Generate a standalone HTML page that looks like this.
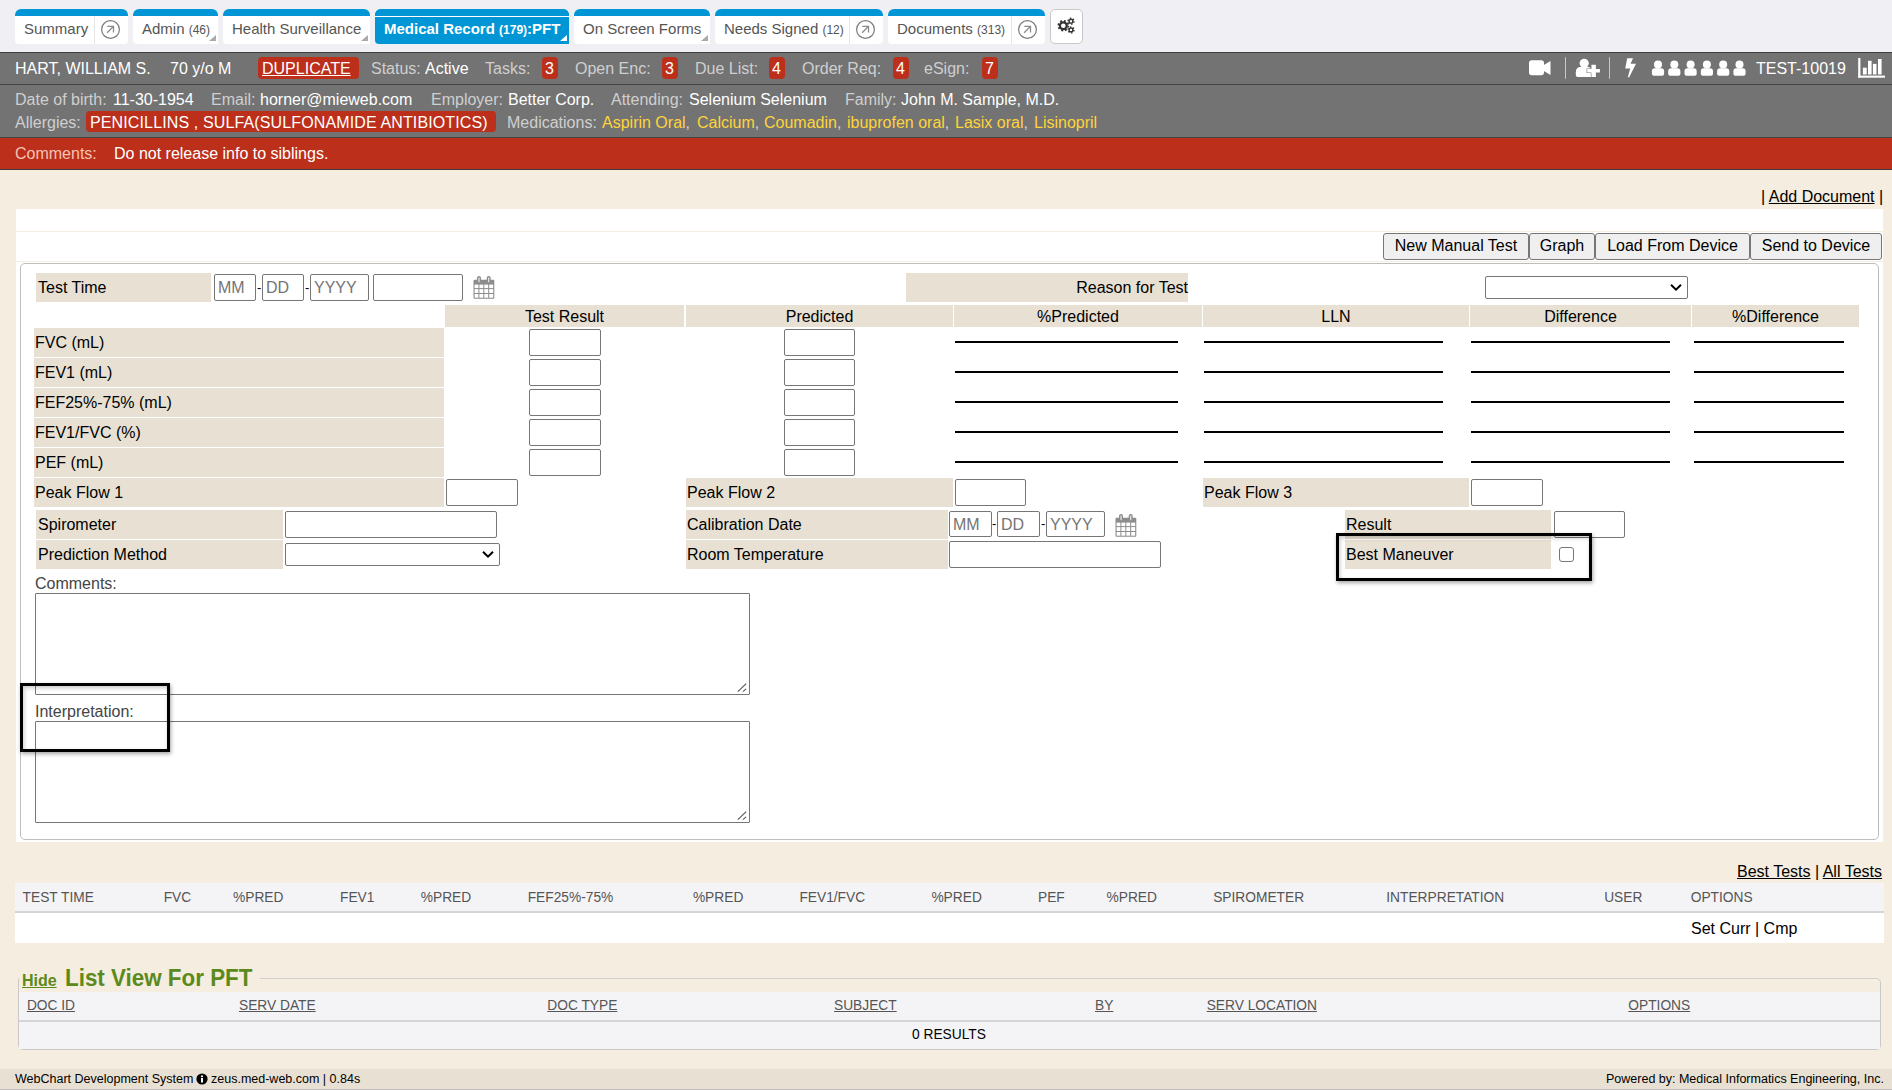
<!DOCTYPE html>
<html><head><meta charset="utf-8">
<style>
*{box-sizing:border-box;}
html,body{margin:0;padding:0;}
body{width:1892px;height:1090px;position:relative;overflow:hidden;background:#f5eddf;font-family:"Liberation Sans",sans-serif;color:#000;}
.a{position:absolute;}
.top{left:0;top:0;width:1892px;height:52px;background:#efeff4;}
.tab{position:absolute;top:9px;height:35px;background:#fff;border-radius:6px 6px 4px 4px;overflow:hidden;}
.tab .bar{position:absolute;left:0;top:0;right:0;height:7px;background:#0096d6;}
.tab .t{position:absolute;top:11px;font-size:15px;color:#555;white-space:nowrap;line-height:17px;}
.tab .t small{font-size:12px;}
.tab .sep{position:absolute;top:7px;bottom:0;width:1px;background:#e6e6e6;}
.tab .tri{position:absolute;right:2px;bottom:3px;width:0;height:0;border-left:7px solid transparent;border-bottom:6px solid #aaa;}
.circ{position:absolute;top:11px;}
.pbar{left:0;top:52px;width:1892px;height:33px;background:#737373;border-top:1px solid #3e3e3e;border-bottom:1px solid #444;}
.pinfo{left:0;top:85px;width:1892px;height:53px;background:#737373;border-bottom:1px solid #444;}
.rbar{left:0;top:138px;width:1892px;height:32px;background:#bc2f1b;border-bottom:1px solid #3c3c3c;}
.w{color:#fff;}
.g{color:#cfcfcf;}
.txt{position:absolute;font-size:16px;line-height:18px;white-space:nowrap;}
.badge{position:absolute;background:#bc2f1b;border-radius:4px;}
.y{color:#ffd43b;}

.lc{position:absolute;background:#e8e1d3;font-size:16px;line-height:18px;white-space:nowrap;padding-left:2px;}
.inp{position:absolute;background:#fff;border:1px solid #767676;border-radius:2px;}
.ph{position:absolute;font-size:16px;line-height:18px;color:#757575;white-space:nowrap;}
.ul{position:absolute;height:2px;background:#000;}
.btn{position:absolute;top:233px;height:27px;background:#efefef;border:1px solid #767676;border-radius:3px;font-size:16px;line-height:18px;text-align:center;padding-top:3px;white-space:nowrap;}
.hd{position:absolute;top:305px;height:22px;background:#e8e1d3;font-size:16px;line-height:18px;text-align:center;padding-top:3px;}

.th{position:absolute;font-size:13.75px;line-height:16px;color:#555;white-space:nowrap;}
.ft{position:absolute;font-size:12.5px;line-height:14px;color:#000;white-space:nowrap;}
</style></head><body>
<div class="a top"></div>
<!-- tabs -->
<div class="tab" style="left:15px;width:113px"><div class="bar"></div><div class="t" style="left:9px">Summary</div><div class="sep" style="left:79px"></div><svg class="circ" style="left:86px" width="19" height="19" viewBox="0 0 19 19"><circle cx="9.5" cy="9.5" r="8.9" fill="none" stroke="#7a7a7a" stroke-width="1.2"/><path d="M6.2 12.8L12.4 6.4M6.3 6.4H12.5V12.6" fill="none" stroke="#8a8a8a" stroke-width="1.3"/></svg></div>
<div class="tab" style="border-radius:6px 6px 0 4px;left:133px;width:85px"><div class="bar"></div><div class="t" style="left:9px">Admin <small>(46)</small></div><div class="tri"></div></div>
<div class="tab" style="border-radius:6px 6px 0 4px;left:223px;width:147px"><div class="bar"></div><div class="t" style="left:9px">Health Surveillance</div><div class="tri"></div></div>
<div class="tab" style="left:375px;width:194px;background:#0096d6;border-radius:6px 6px 0 4px"><div class="bar" style="border-bottom:1px solid #fff;height:8px"></div><div class="t" style="left:9px;color:#fff;font-weight:bold">Medical Record <small>(179)</small>:PFT</div><div class="tri" style="border-bottom-color:#fff"></div></div>
<div class="tab" style="border-radius:6px 6px 0 4px;left:574px;width:136px"><div class="bar"></div><div class="t" style="left:9px">On Screen Forms</div><div class="tri"></div></div>
<div class="tab" style="left:715px;width:168px"><div class="bar"></div><div class="t" style="left:9px">Needs Signed <small>(12)</small></div><div class="sep" style="left:134px"></div><svg class="circ" style="left:141px" width="19" height="19" viewBox="0 0 19 19"><circle cx="9.5" cy="9.5" r="8.9" fill="none" stroke="#7a7a7a" stroke-width="1.2"/><path d="M6.2 12.8L12.4 6.4M6.3 6.4H12.5V12.6" fill="none" stroke="#8a8a8a" stroke-width="1.3"/></svg></div>
<div class="tab" style="left:888px;width:157px"><div class="bar"></div><div class="t" style="left:9px">Documents <small>(313)</small></div><div class="sep" style="left:123px"></div><svg class="circ" style="left:130px" width="19" height="19" viewBox="0 0 19 19"><circle cx="9.5" cy="9.5" r="8.9" fill="none" stroke="#7a7a7a" stroke-width="1.2"/><path d="M6.2 12.8L12.4 6.4M6.3 6.4H12.5V12.6" fill="none" stroke="#8a8a8a" stroke-width="1.3"/></svg></div>
<div class="a" style="left:1050px;top:9px;width:33px;height:35px;background:#fff;border:1px solid #c8c8c8;border-radius:5px;"></div>
<svg class="a" style="left:1050px;top:9px" width="33" height="35" viewBox="1050 9 33 35">
<circle cx="1063.3" cy="25.7" r="3.4" fill="none" stroke="#333" stroke-width="2.2"/>
<circle cx="1063.3" cy="25.7" r="4.9" fill="none" stroke="#333" stroke-width="1.8" stroke-dasharray="1.9 1.95"/>
<circle cx="1071" cy="21.2" r="1.9" fill="none" stroke="#333" stroke-width="1.4"/>
<circle cx="1071" cy="21.2" r="3" fill="none" stroke="#333" stroke-width="1.3" stroke-dasharray="1.5 1.64"/>
<circle cx="1071" cy="29.9" r="1.9" fill="none" stroke="#333" stroke-width="1.4"/>
<circle cx="1071" cy="29.9" r="3" fill="none" stroke="#333" stroke-width="1.3" stroke-dasharray="1.5 1.64"/>
</svg>

<!-- patient bar -->
<div class="a pbar"></div>
<div class="a pinfo"></div>
<div class="a rbar"></div>

<!-- row1 -->
<div class="txt w" style="left:15px;top:60px">HART, WILLIAM S.</div>
<div class="txt w" style="left:170px;top:60px">70 y/o M</div>
<div class="badge" style="left:258px;top:57px;width:101px;height:22px"></div>
<div class="txt" style="left:262px;top:60px;color:#fff;text-decoration:underline">DUPLICATE</div>
<div class="txt g" style="left:371px;top:60px">Status:</div><div class="txt w" style="left:425px;top:60px">Active</div>
<div class="txt g" style="left:485px;top:60px">Tasks:</div>
<div class="badge" style="left:542px;top:57px;width:16px;height:22px"></div><div class="txt w" style="left:545px;top:60px">3</div>
<div class="txt g" style="left:575px;top:60px">Open Enc:</div>
<div class="badge" style="left:662px;top:57px;width:16px;height:22px"></div><div class="txt w" style="left:665px;top:60px">3</div>
<div class="txt g" style="left:695px;top:60px">Due List:</div>
<div class="badge" style="left:769px;top:57px;width:16px;height:22px"></div><div class="txt w" style="left:772px;top:60px">4</div>
<div class="txt g" style="left:802px;top:60px">Order Req:</div>
<div class="badge" style="left:893px;top:57px;width:16px;height:22px"></div><div class="txt w" style="left:896px;top:60px">4</div>
<div class="txt g" style="left:924px;top:60px">eSign:</div>
<div class="badge" style="left:982px;top:57px;width:16px;height:22px"></div><div class="txt w" style="left:985px;top:60px">7</div>
<div class="txt w" style="left:1756px;top:60px">TEST-10019</div>
<svg class="a" style="left:1520px;top:52px" width="372" height="33" viewBox="1520 52 372 33" fill="#fff">
<rect x="1529" y="60.2" width="15" height="15.1" rx="2.8"/>
<polygon points="1543,65.5 1550.5,61 1550.5,75 1543,70.5"/>
<rect x="1565" y="57.2" width="1" height="21.6" fill="#c8c8c8"/>
<circle cx="1584.2" cy="63.3" r="4.6"/>
<path d="M1575.8 75V72.5Q1575.8 67 1580.5 67H1588Q1591 67 1591 70V77H1577.8Q1575.8 77 1575.8 75Z"/>
<path d="M1587.2 69H1591.4V64.8H1595.9V69H1599.9V72.5H1595.9V77H1591.4V72.5H1587.2Z" stroke="#737373" stroke-width="1.2" paint-order="stroke"/>
<rect x="1609" y="57.2" width="1" height="21.6" fill="#c8c8c8"/>
<polygon points="1627.2,58.3 1633,58.3 1630.6,63.8 1636,63.8 1629.2,77.2 1627.8,77.2 1630.2,68.5 1625.2,68.5"/>
<circle cx="1658.0" cy="64.6" r="4"/><path d="M1651.9 73.7V71.5Q1651.9 68.3 1654.9 68.3H1661.1Q1664.1 68.3 1664.1 71.5V73.7Q1664.1 75.7 1662.1 75.7H1653.9Q1651.9 75.7 1651.9 73.7Z"/><circle cx="1674.3" cy="64.6" r="4"/><path d="M1668.2 73.7V71.5Q1668.2 68.3 1671.2 68.3H1677.4Q1680.4 68.3 1680.4 71.5V73.7Q1680.4 75.7 1678.4 75.7H1670.2Q1668.2 75.7 1668.2 73.7Z"/><circle cx="1690.6" cy="64.6" r="4"/><path d="M1684.5 73.7V71.5Q1684.5 68.3 1687.5 68.3H1693.7Q1696.7 68.3 1696.7 71.5V73.7Q1696.7 75.7 1694.7 75.7H1686.5Q1684.5 75.7 1684.5 73.7Z"/><circle cx="1706.9" cy="64.6" r="4"/><path d="M1700.8 73.7V71.5Q1700.8 68.3 1703.8 68.3H1710.0Q1713.0 68.3 1713.0 71.5V73.7Q1713.0 75.7 1711.0 75.7H1702.8Q1700.8 75.7 1700.8 73.7Z"/><circle cx="1723.2" cy="64.6" r="4"/><path d="M1717.1 73.7V71.5Q1717.1 68.3 1720.1 68.3H1726.3Q1729.3 68.3 1729.3 71.5V73.7Q1729.3 75.7 1727.3 75.7H1719.1Q1717.1 75.7 1717.1 73.7Z"/><circle cx="1739.5" cy="64.6" r="4"/><path d="M1733.4 73.7V71.5Q1733.4 68.3 1736.4 68.3H1742.6Q1745.6 68.3 1745.6 71.5V73.7Q1745.6 75.7 1743.6 75.7H1735.4Q1733.4 75.7 1733.4 73.7Z"/>
<rect x="1858.2" y="58" width="2.2" height="19.7"/>
<rect x="1858.2" y="75.6" width="26.8" height="2.1"/>
<rect x="1862.9" y="67.7" width="3.8" height="6.8"/>
<rect x="1868" y="60.8" width="3.6" height="13.7"/>
<rect x="1872.9" y="63.9" width="3.6" height="10.6"/>
<rect x="1878" y="59" width="3.6" height="15.5"/>
</svg>
<!-- row2 -->
<div class="txt g" style="left:15px;top:91px">Date of birth:</div><div class="txt w" style="left:113px;top:91px">11-30-1954</div>
<div class="txt g" style="left:211px;top:91px">Email:</div><div class="txt w" style="left:260px;top:91px">horner@mieweb.com</div>
<div class="txt g" style="left:431px;top:91px">Employer:</div><div class="txt w" style="left:508px;top:91px">Better Corp.</div>
<div class="txt g" style="left:611px;top:91px">Attending:</div><div class="txt w" style="left:689px;top:91px">Selenium Selenium</div>
<div class="txt g" style="left:845px;top:91px">Family:</div><div class="txt w" style="left:901px;top:91px">John M. Sample, M.D.</div>
<div class="txt g" style="left:15px;top:114px">Allergies:</div>
<div class="badge" style="left:86px;top:111px;width:410px;height:21px"></div>
<div class="txt w" style="left:90px;top:114px;letter-spacing:0.13px">PENICILLINS , SULFA(SULFONAMIDE ANTIBIOTICS)</div>
<div class="txt g" style="left:507px;top:114px">Medications:</div>
<div class="txt y" style="left:602px;top:114px">Aspirin Oral<span class="g">,</span></div>
<div class="txt y" style="left:697px;top:114px">Calcium<span class="g">,</span></div>
<div class="txt y" style="left:764px;top:114px">Coumadin<span class="g">,</span></div>
<div class="txt y" style="left:847px;top:114px">ibuprofen oral<span class="g">,</span></div>
<div class="txt y" style="left:955px;top:114px">Lasix oral<span class="g">,</span></div>
<div class="txt y" style="left:1034px;top:114px">Lisinopril</div>
<!-- comments bar -->
<div class="txt" style="left:15px;top:145px;color:#f6c3b3">Comments:</div>
<div class="txt w" style="left:114px;top:145px">Do not release info to siblings.</div>
<div class="txt" style="left:1761px;top:188px">| <span style="text-decoration:underline">Add Document</span> |</div>
<div class="a" style="left:16px;top:209px;width:1867px;height:633px;background:#fff"></div>
<div class="a" style="left:16px;top:231px;width:1867px;height:1px;background:#f4eee2"></div>
<div class="a" style="left:16px;top:261px;width:1867px;height:1px;background:#f4eee2"></div>
<div class="btn" style="left:1383px;width:146px">New Manual Test</div>
<div class="btn" style="left:1529px;width:66px">Graph</div>
<div class="btn" style="left:1595px;width:155px">Load From Device</div>
<div class="btn" style="left:1750px;width:132px">Send to Device</div>
<div class="a" style="left:20px;top:263px;width:1859px;height:577px;border:1px solid #bdbdbd;border-radius:5px"></div>
<div class="lc" style="left:36px;top:273px;width:175px;height:29px;padding-top:6px;padding-left:2px">Test Time</div>
<div class="inp" style="left:214px;top:274px;width:42px;height:27px"></div>
<div class="ph" style="left:218px;top:279px">MM</div>
<div class="txt" style="left:257px;top:279px;font-size:13px">-</div>
<div class="inp" style="left:262px;top:274px;width:42px;height:27px"></div>
<div class="ph" style="left:266px;top:279px">DD</div>
<div class="txt" style="left:305px;top:279px;font-size:13px">-</div>
<div class="inp" style="left:310px;top:274px;width:59px;height:27px"></div>
<div class="ph" style="left:314px;top:279px">YYYY</div>
<div class="inp" style="left:373px;top:274px;width:90px;height:27px"></div>
<svg class="a" style="left:472px;top:275px" width="23" height="24" viewBox="0 0 23 24"><rect x="1.5" y="4.7" width="20.8" height="19" rx="1" fill="#8d8d8d"/><g fill="#fff"><rect x="2.6" y="9.6" width="3.8" height="3.5"/><rect x="2.6" y="14.1" width="3.8" height="3.9"/><rect x="2.6" y="19.0" width="3.8" height="3.7"/><rect x="7.4" y="9.6" width="3.9" height="3.5"/><rect x="7.4" y="14.1" width="3.9" height="3.9"/><rect x="7.4" y="19.0" width="3.9" height="3.7"/><rect x="12.3" y="9.6" width="3.9" height="3.5"/><rect x="12.3" y="14.1" width="3.9" height="3.9"/><rect x="12.3" y="19.0" width="3.9" height="3.7"/><rect x="17.2" y="9.6" width="4.0" height="3.5"/><rect x="17.2" y="14.1" width="4.0" height="3.9"/><rect x="17.2" y="19.0" width="4.0" height="3.7"/></g><rect x="5" y="1.1" width="4" height="7.2" rx="2" fill="#8d8d8d"/><rect x="14.7" y="1.1" width="4" height="7.2" rx="2" fill="#8d8d8d"/><rect x="6.4" y="2.6" width="1.2" height="4.6" fill="#e8e8e8"/><rect x="16.1" y="2.6" width="1.2" height="4.6" fill="#e8e8e8"/></svg>
<div class="lc" style="left:906px;top:273px;width:282px;height:29px;padding-top:6px;text-align:right;padding-right:0">Reason for Test</div>
<div class="inp" style="left:1485px;top:276px;width:203px;height:23px"></div>
<svg class="a" style="left:1670px;top:283px" width="12" height="9" viewBox="0 0 12 9"><path d="M1 1.8L6 6.6L11 1.8" fill="none" stroke="#000" stroke-width="2"/></svg>
<div class="hd" style="left:445px;width:239px">Test Result</div>
<div class="hd" style="left:686px;width:267px">Predicted</div>
<div class="hd" style="left:954px;width:248px">%Predicted</div>
<div class="hd" style="left:1203px;width:266px">LLN</div>
<div class="hd" style="left:1470px;width:221px">Difference</div>
<div class="hd" style="left:1692px;width:167px">%Difference</div>
<div class="lc" style="left:34px;top:328px;width:410px;height:29px;padding-top:6px;padding-left:1px">FVC (mL)</div>
<div class="inp" style="left:529px;top:329px;width:72px;height:27px"></div>
<div class="inp" style="left:784px;top:329px;width:71px;height:27px"></div>
<div class="ul" style="left:955px;top:341px;width:223px"></div>
<div class="ul" style="left:1204px;top:341px;width:239px"></div>
<div class="ul" style="left:1471px;top:341px;width:199px"></div>
<div class="ul" style="left:1694px;top:341px;width:150px"></div>
<div class="lc" style="left:34px;top:358px;width:410px;height:29px;padding-top:6px;padding-left:1px">FEV1 (mL)</div>
<div class="inp" style="left:529px;top:359px;width:72px;height:27px"></div>
<div class="inp" style="left:784px;top:359px;width:71px;height:27px"></div>
<div class="ul" style="left:955px;top:371px;width:223px"></div>
<div class="ul" style="left:1204px;top:371px;width:239px"></div>
<div class="ul" style="left:1471px;top:371px;width:199px"></div>
<div class="ul" style="left:1694px;top:371px;width:150px"></div>
<div class="lc" style="left:34px;top:388px;width:410px;height:29px;padding-top:6px;padding-left:1px">FEF25%-75% (mL)</div>
<div class="inp" style="left:529px;top:389px;width:72px;height:27px"></div>
<div class="inp" style="left:784px;top:389px;width:71px;height:27px"></div>
<div class="ul" style="left:955px;top:401px;width:223px"></div>
<div class="ul" style="left:1204px;top:401px;width:239px"></div>
<div class="ul" style="left:1471px;top:401px;width:199px"></div>
<div class="ul" style="left:1694px;top:401px;width:150px"></div>
<div class="lc" style="left:34px;top:418px;width:410px;height:29px;padding-top:6px;padding-left:1px">FEV1/FVC (%)</div>
<div class="inp" style="left:529px;top:419px;width:72px;height:27px"></div>
<div class="inp" style="left:784px;top:419px;width:71px;height:27px"></div>
<div class="ul" style="left:955px;top:431px;width:223px"></div>
<div class="ul" style="left:1204px;top:431px;width:239px"></div>
<div class="ul" style="left:1471px;top:431px;width:199px"></div>
<div class="ul" style="left:1694px;top:431px;width:150px"></div>
<div class="lc" style="left:34px;top:448px;width:410px;height:29px;padding-top:6px;padding-left:1px">PEF (mL)</div>
<div class="inp" style="left:529px;top:449px;width:72px;height:27px"></div>
<div class="inp" style="left:784px;top:449px;width:71px;height:27px"></div>
<div class="ul" style="left:955px;top:461px;width:223px"></div>
<div class="ul" style="left:1204px;top:461px;width:239px"></div>
<div class="ul" style="left:1471px;top:461px;width:199px"></div>
<div class="ul" style="left:1694px;top:461px;width:150px"></div>
<div class="lc" style="left:34px;top:478px;width:410px;height:29px;padding-top:6px;padding-left:1px">Peak Flow 1</div>
<div class="inp" style="left:446px;top:479px;width:72px;height:27px"></div>
<div class="lc" style="left:686px;top:478px;width:267px;height:29px;padding-top:6px;padding-left:1px">Peak Flow 2</div>
<div class="inp" style="left:955px;top:479px;width:71px;height:27px"></div>
<div class="lc" style="left:1203px;top:478px;width:266px;height:29px;padding-top:6px;padding-left:1px">Peak Flow 3</div>
<div class="inp" style="left:1471px;top:479px;width:72px;height:27px"></div>
<div class="lc" style="left:36px;top:510px;width:247px;height:29px;padding-top:6px;padding-left:2px">Spirometer</div>
<div class="inp" style="left:285px;top:511px;width:212px;height:27px"></div>
<div class="lc" style="left:686px;top:510px;width:262px;height:29px;padding-top:6px;padding-left:1px">Calibration Date</div>
<div class="inp" style="left:949px;top:511px;width:43px;height:26px"></div>
<div class="ph" style="left:953px;top:516px">MM</div>
<div class="txt" style="left:992px;top:515px;font-size:13px">-</div>
<div class="inp" style="left:997px;top:511px;width:43px;height:26px"></div>
<div class="ph" style="left:1001px;top:516px">DD</div>
<div class="txt" style="left:1041px;top:515px;font-size:13px">-</div>
<div class="inp" style="left:1046px;top:511px;width:59px;height:26px"></div>
<div class="ph" style="left:1050px;top:516px">YYYY</div>
<svg class="a" style="left:1114px;top:513px" width="23" height="24" viewBox="0 0 23 24"><rect x="1.5" y="4.7" width="20.8" height="19" rx="1" fill="#8d8d8d"/><g fill="#fff"><rect x="2.6" y="9.6" width="3.8" height="3.5"/><rect x="2.6" y="14.1" width="3.8" height="3.9"/><rect x="2.6" y="19.0" width="3.8" height="3.7"/><rect x="7.4" y="9.6" width="3.9" height="3.5"/><rect x="7.4" y="14.1" width="3.9" height="3.9"/><rect x="7.4" y="19.0" width="3.9" height="3.7"/><rect x="12.3" y="9.6" width="3.9" height="3.5"/><rect x="12.3" y="14.1" width="3.9" height="3.9"/><rect x="12.3" y="19.0" width="3.9" height="3.7"/><rect x="17.2" y="9.6" width="4.0" height="3.5"/><rect x="17.2" y="14.1" width="4.0" height="3.9"/><rect x="17.2" y="19.0" width="4.0" height="3.7"/></g><rect x="5" y="1.1" width="4" height="7.2" rx="2" fill="#8d8d8d"/><rect x="14.7" y="1.1" width="4" height="7.2" rx="2" fill="#8d8d8d"/><rect x="6.4" y="2.6" width="1.2" height="4.6" fill="#e8e8e8"/><rect x="16.1" y="2.6" width="1.2" height="4.6" fill="#e8e8e8"/></svg>
<div class="lc" style="left:1345px;top:510px;width:206px;height:29px;padding-top:6px;padding-left:1px">Result</div>
<div class="inp" style="left:1554px;top:511px;width:71px;height:27px"></div>
<div class="lc" style="left:36px;top:540px;width:247px;height:29px;padding-top:6px;padding-left:2px">Prediction Method</div>
<div class="inp" style="left:285px;top:543px;width:215px;height:23px"></div>
<svg class="a" style="left:482px;top:550px" width="12" height="9" viewBox="0 0 12 9"><path d="M1 1.8L6 6.6L11 1.8" fill="none" stroke="#000" stroke-width="2"/></svg>
<div class="lc" style="left:686px;top:540px;width:262px;height:29px;padding-top:6px;padding-left:1px">Room Temperature</div>
<div class="inp" style="left:949px;top:541px;width:212px;height:27px"></div>
<div class="lc" style="left:1345px;top:540px;width:206px;height:29px;padding-top:6px;padding-left:1px">Best Maneuver</div>
<div class="a" style="left:1559px;top:547px;width:15px;height:15px;border:1px solid #767676;border-radius:3px;background:#fff"></div>
<div class="a" style="left:1336px;top:533px;width:256px;height:48px;border:3px solid #000;box-shadow:1px 2px 4px rgba(0,0,0,.35),inset 1px 2px 4px rgba(0,0,0,.22)"></div>
<div class="txt" style="left:35px;top:575px;color:#444">Comments:</div>
<div class="inp" style="left:35px;top:593px;width:715px;height:102px;border-radius:1px"></div>
<div class="txt" style="left:35px;top:703px;color:#444">Interpretation:</div>
<div class="inp" style="left:35px;top:721px;width:715px;height:102px;border-radius:1px"></div>
<svg class="a" style="left:734px;top:679px" width="16" height="16" viewBox="734 679 16 16"><path d="M737.8 691.6 L746.2 683.6 M742.9 691.6 L746.2 688.8" stroke="#555" stroke-width="1.1" fill="none"/></svg>
<svg class="a" style="left:734px;top:807px" width="16" height="16" viewBox="734 807 16 16"><path d="M737.8 819.6 L746.2 811.6 M742.9 819.6 L746.2 816.8" stroke="#555" stroke-width="1.1" fill="none"/></svg>
<div class="a" style="left:20px;top:683px;width:150px;height:69px;border:3px solid #000;box-shadow:1px 2px 4px rgba(0,0,0,.35),inset 1px 2px 4px rgba(0,0,0,.22)"></div>
<div class="txt" style="left:1737px;top:863px"><span style="text-decoration:underline">Best Tests</span> | <span style="text-decoration:underline">All Tests</span></div>
<div class="a" style="left:15px;top:883px;width:1869px;height:30px;background:#f4f4f7;border-bottom:2px solid #d5d5d5"></div>
<div class="a" style="left:15px;top:913px;width:1869px;height:30px;background:#fff"></div>
<div class="th" style="left:22.6px;top:890px">TEST TIME</div>
<div class="th" style="left:163.7px;top:890px">FVC</div>
<div class="th" style="left:233.0px;top:890px">%PRED</div>
<div class="th" style="left:340.0px;top:890px">FEV1</div>
<div class="th" style="left:420.8px;top:890px">%PRED</div>
<div class="th" style="left:527.7px;top:890px">FEF25%-75%</div>
<div class="th" style="left:692.9px;top:890px">%PRED</div>
<div class="th" style="left:799.4px;top:890px">FEV1/FVC</div>
<div class="th" style="left:931.4px;top:890px">%PRED</div>
<div class="th" style="left:1038.0px;top:890px">PEF</div>
<div class="th" style="left:1106.5px;top:890px">%PRED</div>
<div class="th" style="left:1213.2px;top:890px">SPIROMETER</div>
<div class="th" style="left:1386.3px;top:890px">INTERPRETATION</div>
<div class="th" style="left:1604.2px;top:890px">USER</div>
<div class="th" style="left:1690.7px;top:890px">OPTIONS</div>
<div class="txt" style="left:1691px;top:920px">Set Curr | Cmp</div>
<div class="a" style="left:18px;top:978px;width:1863px;height:72px;border:1px solid #c9c9c9;border-top:1px solid #d0d0d0;border-radius:0 5px 5px 5px"></div>
<div class="a" style="left:19px;top:975px;width:241px;height:5px;background:#f5eddf"></div>
<div class="a" style="left:22px;top:972px;font-size:16px;line-height:18px;font-weight:bold;color:#5b8a1c;text-decoration:underline;white-space:nowrap">Hide</div>
<div class="a" style="left:65px;top:966px;font-size:22.4px;line-height:25px;font-weight:bold;color:#5b8a1c;white-space:nowrap;transform:scaleY(1.1);transform-origin:0 20px">List View For PFT</div>
<div class="a" style="left:19px;top:992px;width:1861px;height:30px;background:#f4f4f7;border-bottom:2px solid #d5d5d5"></div>
<div class="a" style="left:19px;top:1022px;width:1861px;height:27px;background:#f4f4f7"></div>
<div class="th" style="left:26.9px;top:998px;text-decoration:underline">DOC ID</div>
<div class="th" style="left:239.0px;top:998px;text-decoration:underline">SERV DATE</div>
<div class="th" style="left:547.3px;top:998px;text-decoration:underline">DOC TYPE</div>
<div class="th" style="left:834.0px;top:998px;text-decoration:underline">SUBJECT</div>
<div class="th" style="left:1095.0px;top:998px;text-decoration:underline">BY</div>
<div class="th" style="left:1206.7px;top:998px;text-decoration:underline">SERV LOCATION</div>
<div class="th" style="left:1628.3px;top:998px;text-decoration:underline">OPTIONS</div>
<div class="th" style="left:912px;top:1027px;color:#000">0 RESULTS</div>
<div class="a" style="left:0;top:1069px;width:1892px;height:21px;background:#e8e1d3;border-bottom:1px solid #bdbdbd"></div>
<div class="ft" style="left:15px;top:1072px">WebChart Development System</div>
<svg class="a" style="left:196px;top:1073px" width="12" height="12" viewBox="0 0 12 12"><circle cx="6" cy="6" r="5.6" fill="#000"/><rect x="5" y="5" width="2" height="4.5" fill="#fff"/><circle cx="6" cy="3.3" r="1.1" fill="#fff"/></svg>
<div class="ft" style="left:211px;top:1072px">zeus.med-web.com | 0.84s</div>
<div class="ft" style="left:1606px;top:1072px">Powered by: Medical Informatics Engineering, Inc.</div>
</body></html>
